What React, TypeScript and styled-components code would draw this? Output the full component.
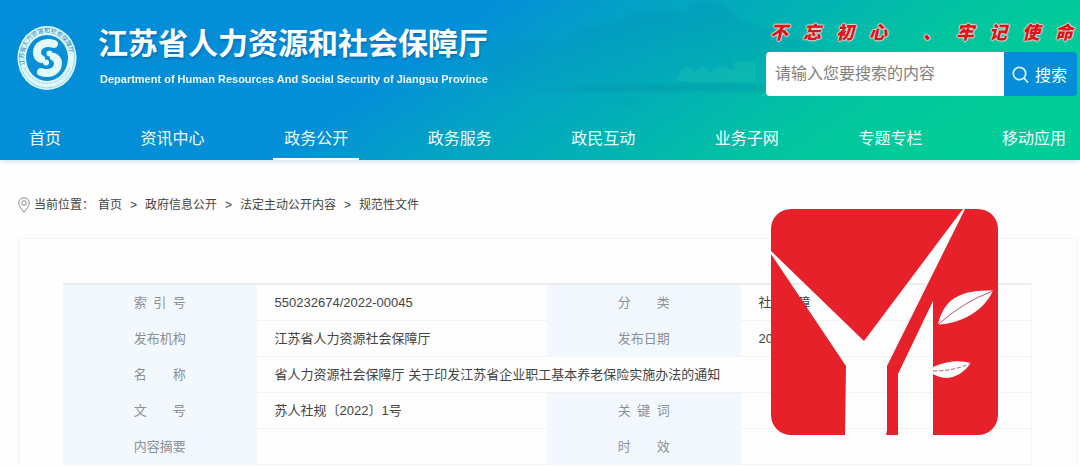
import React from 'react';
import styled, { createGlobalStyle } from 'styled-components';

const GlobalStyle = createGlobalStyle`
  * { box-sizing: border-box; }
  body {
    margin: 0;
    background: #fefefe;
    color: #444;
    font-family: "Liberation Sans", "Noto Sans CJK SC", sans-serif;
    font-size: 13px;
  }
  a { color: inherit; text-decoration: none; }
`;

const Page = styled.div`
  position: relative;
`;

const Header = styled.header`
  position: relative;
  background: linear-gradient(145deg, #048dd8 0%, #048fd8 38%, #03a3c4 50%, #02b2b4 62%, #02c59f 76%, #02cc98 88%);
  box-shadow: 0 2px 4px #d5e6ee;
`;

const Scenery = styled.svg`
  position: absolute;
  inset: 0;
  width: 100%;
  height: 100%;
`;

const Banner = styled.div`
  position: relative;
  display: flex;
  justify-content: space-between;
  align-items: flex-start;
  height: 116px;
  padding: 22px 3px 0 17px;
`;

const Brand = styled.a`
  display: flex;
  align-items: flex-start;
  gap: 21px;
  color: #fff;
`;

const Emblem = styled.svg`
  width: 60px;
  height: 66px;
  margin-top: 3px;
`;

const BrandText = styled.div`
  display: flex;
  flex-direction: column;
  gap: 5px;
`;

const SiteName = styled.h1`
  margin: 0;
  font-size: 30px;
  line-height: 44px;
  font-weight: 700;
  white-space: nowrap;
  text-shadow: 1px 2px 2px rgba(0, 60, 120, 0.35);
`;

const SiteNameEn = styled.p`
  margin: 0;
  padding-left: 2px;
  font-size: 11px;
  line-height: 16px;
  font-weight: 700;
  white-space: nowrap;
  opacity: 0.92;
`;

const Aside = styled.div`
  width: 311px;
`;

const Motto = styled.p`
  display: flex;
  justify-content: space-between;
  margin: 0;
  padding: 0 4px;
  height: 30px;
  font-size: 18px;
  line-height: 22px;
  font-weight: 900;
  font-style: italic;
  color: #d8141c;
  text-shadow: 1px 0 1px #e8d8cc, -1px 0 1px #e8d8cc, 0 1px 1px #e8d8cc, 0 -1px 1px #e8d8cc;
`;

const Phrase = styled.span`
  display: flex;
  gap: 15px;
`;

const SearchForm = styled.form`
  display: flex;
  height: 44px;
`;

const SearchInput = styled.input`
  flex: 1;
  min-width: 0;
  border: 0;
  border-radius: 4px 0 0 4px;
  padding: 0 9px;
  background: #fff;
  font: inherit;
  font-size: 16px;
  color: #444;
  &::placeholder { color: #808080; opacity: 1; }
`;

const SearchButton = styled.button`
  display: flex;
  align-items: center;
  justify-content: center;
  gap: 6px;
  width: 73px;
  padding: 0 2px 0 0;
  border: 0;
  border-radius: 0 4px 4px 0;
  background: #058dda;
  color: #fff;
  font: inherit;
  font-size: 16px;
`;

const Nav = styled.nav`
  position: relative;
  display: flex;
  justify-content: space-between;
  padding: 0 3px 0 18px;
`;

const NavLink = styled.a<{ $active?: boolean }>`
  height: 44px;
  padding: 0 11px;
  border-bottom: 2px solid ${p => (p.$active ? '#fff' : 'transparent')};
  color: #f0fdff;
  font-size: 16px;
  line-height: 46px;
  white-space: nowrap;
`;

const Breadcrumb = styled.nav`
  display: flex;
  align-items: center;
  gap: 4px;
  padding: 35px 18px 23px;
  font-size: 12px;
  line-height: 20px;
`;

const Trail = styled.span`
  display: flex;
  gap: 8px;
`;

const PinIcon = styled.svg`
  width: 12px;
  height: 16px;
`;

const Card = styled.main`
  margin: 0 3px 0 18px;
  padding: 44px 44px 0;
  border: 1px solid #f3f3f3;
  border-bottom: 0;
`;

const InfoTable = styled.table`
  width: 100%;
  table-layout: fixed;
  border-collapse: separate;
  border-spacing: 0;
  border-top: 2px solid #ececec;
  border-right: 1px solid #f4f4f4;
`;

const LabelCell = styled.th`
  height: 36px;
  padding: 0 0 1px;
  background: #f3f8fe;
  color: #8b9096;
  font-weight: 400;
  line-height: 20px;
  text-align: center;
  white-space: pre;
`;

const ValueCell = styled.td`
  height: 36px;
  padding: 0 18px;
  border-bottom: 1px solid #f1f3f3;
  line-height: 20px;
  white-space: nowrap;
`;

const Stamp = styled.svg`
  position: absolute;
  top: 209px;
  right: 82px;
  width: 227px;
  height: 226px;
`;

const navItems = ['首页', '资讯中心', '政务公开', '政务服务', '政民互动', '业务子网', '专题专栏', '移动应用'];
const crumbs = ['首页', '政府信息公开', '法定主动公开内容', '规范性文件'];

type Field = [label: string, value: string];
const rows: Field[][] = [
  [['索\u2002引\u2002号', '550232674/2022-00045'], ['分\u3000\u3000类', '社会保障']],
  [['发布机构', '江苏省人力资源社会保障厅'], ['发布日期', '2022-01-28']],
  [['名\u3000\u3000称', '省人力资源社会保障厅 关于印发江苏省企业职工基本养老保险实施办法的通知']],
  [['文\u3000\u3000号', '苏人社规〔2022〕1号'], ['关\u2002键\u2002词', '']],
  [['内容摘要', ''], ['时\u3000\u3000效', '']],
];

export default function App() {
  return (
    <Page>
      <GlobalStyle />
      <Header>
        <Scenery viewBox="0 0 1080 160" preserveAspectRatio="none" aria-hidden="true">
          <defs>
            <linearGradient id="hill" x1="0" y1="0" x2="0" y2="1">
              <stop offset="0" stopColor="#0588b4" stopOpacity="0.28" />
              <stop offset="1" stopColor="#0588b4" stopOpacity="0.06" />
            </linearGradient>
            <filter id="mist"><feGaussianBlur stdDeviation="2" /></filter>
          </defs>
          <g filter="url(#mist)">
            <path d="M490 90V54L530 40L560 42L580 28L612 24L634 12L664 9L684 12L700 2L724 4L744 22L780 30L830 52V90Z" fill="url(#hill)" />
            <path d="M530 89Q640 84 766 85V91H620Z" fill="#057f9c" opacity="0.28" />
            <path d="M610 99Q624 96 640 101L628 106Z" fill="#057f9c" opacity="0.14" />
          </g>
          <g fill="#30cdb8" opacity="0.22">
            <path d="M676 80L682 70L688 66L694 72L702 66L710 72L722 66L734 70V62H756V82H686Z" />
          </g>
        </Scenery>
        <Banner>
          <Brand href="#">
            <Emblem viewBox="0 0 60 66" preserveAspectRatio="none" aria-hidden="true">
              <defs>
                <path id="ring-text" d="M8 40A23 25 0 1 1 52 40" />
              </defs>
              <ellipse cx="30" cy="33" rx="29.5" ry="32" fill="#dff8fc" />
              <ellipse cx="30" cy="33" rx="21" ry="23" fill="#0a8fd6" />
              <ellipse cx="30" cy="33" rx="27.5" ry="30" fill="none" stroke="#74c6e6" strokeWidth="0.7" />
              <path d="M7 42A25 27 0 0 0 53 42" fill="none" stroke="#8fcfe6" strokeWidth="1.2" strokeDasharray="1 1" />
              <text fontSize="6" fill="#2187b5"><textPath href="#ring-text">江苏省人力资源和社会保障厅</textPath></text>
              <g fill="none" stroke="#e4fbfc" strokeWidth="8" strokeLinecap="round">
                <path d="M37 19C28 16 20 20 20 28C20 31 22 33 24 34" />
                <path d="M24 47C33 50 41 46 41 38C41 35 39 33 37 32" />
              </g>
              <circle cx="32.500" cy="28.500" r="3" fill="#e4fbfc" />
              <circle cx="29" cy="37.500" r="3" fill="#e4fbfc" />
            </Emblem>
            <BrandText>
              <SiteName>江苏省人力资源和社会保障厅</SiteName>
              <SiteNameEn>Department of Human Resources And Social Security of Jiangsu Province</SiteNameEn>
            </BrandText>
          </Brand>
          <Aside>
            <Motto>
              <Phrase>{[...'不忘初心'].map(c => <span key={c}>{c}</span>)}</Phrase>
              <Phrase>{[...'、牢记使命'].map(c => <span key={c}>{c}</span>)}</Phrase>
            </Motto>
            <SearchForm onSubmit={e => e.preventDefault()}>
              <SearchInput type="text" aria-label="搜索内容" placeholder="请输入您要搜索的内容" />
              <SearchButton type="submit">
                <svg width="17" height="17" viewBox="0 0 17 17" fill="none" stroke="#d9f1fc" strokeWidth="1.8" strokeLinecap="round" aria-hidden="true">
                  <circle cx="7.500" cy="7.500" r="6.200" />
                  <path d="M12 12L15.500 16" />
                </svg>
                搜索
              </SearchButton>
            </SearchForm>
          </Aside>
        </Banner>
        <Nav>
          {navItems.map(item => (
            <NavLink key={item} href="#" $active={item === '政务公开'}>{item}</NavLink>
          ))}
        </Nav>
      </Header>

      <Breadcrumb>
        <PinIcon viewBox="0 0 12 16" fill="none" stroke="#8a8a8a" aria-hidden="true">
          <path d="M6 15.300C3.500 12 .7 9.200 .7 6A5.300 5.300 0 0 1 11.300 6C11.300 9.200 8.500 12 6 15.300Z" />
          <circle cx="6" cy="6" r="2.300" />
        </PinIcon>
        <span>当前位置：</span>
        <Trail>
          {crumbs.map((crumb, i) => (
            <React.Fragment key={crumb}>
              {i > 0 && <span>&gt;</span>}
              <a href="#">{crumb}</a>
            </React.Fragment>
          ))}
        </Trail>
      </Breadcrumb>

      <Card>
        <InfoTable>
          <colgroup>
            <col style={{ width: '20%' }} />
            <col style={{ width: '30%' }} />
            <col style={{ width: '20%' }} />
            <col style={{ width: '30%' }} />
          </colgroup>
          <tbody>
            {rows.map(fields => (
              <tr key={fields[0][0]}>
                {fields.map(([label, value]) => (
                  <React.Fragment key={label}>
                    <LabelCell scope="row">{label}</LabelCell>
                    <ValueCell colSpan={fields.length === 1 ? 3 : 1}>{value}</ValueCell>
                  </React.Fragment>
                ))}
              </tr>
            ))}
          </tbody>
        </InfoTable>
      </Card>

      <Stamp viewBox="0 0 227 226" aria-hidden="true">
        <path
          fill="#e6212a"
          fillRule="evenodd"
          d="M20 0H192L93 132L0 42V20A20 20 0 0 1 20 0Z
             M194 0H207A20 20 0 0 1 227 20V206A20 20 0 0 1 207 226H162V165Q169 169 176 169Q190 168 200 154Q182 149 162 158V92L127 165V226H115L116 221V157Z
             M0 45L75 157L74 226H20A20 20 0 0 1 0 206Z
             M167 115.500C172 95 183 80 222 81.500C214 101 190 115 167 115.500Z"
        />
        <g fill="none" stroke="#a82c48" strokeWidth="0.8">
          <path d="M167 115.500Q192 93 222 82" />
          <path d="M162 162Q184 162 200 154" strokeDasharray="4 2" />
        </g>
      </Stamp>
    </Page>
  );
}
